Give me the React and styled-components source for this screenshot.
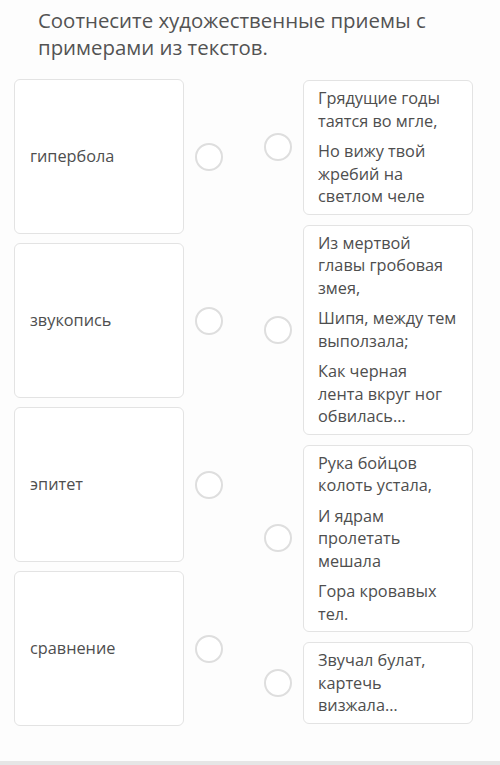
import React from "react";
import styled, { createGlobalStyle } from "styled-components";

const Global = createGlobalStyle`
  html, body { margin: 0; padding: 0; background: #fdfdfd; }
  body { font-family: "Open Sans", "Noto Sans", sans-serif; color: #4e4e4e; }
`;

const Page = styled.div`
  width: 500px;
  height: 765px;
  display: flex;
  flex-direction: column;
  background: #fdfdfd;
  overflow: hidden;
`;

const Title = styled.h1`
  margin: 0;
  padding: 7px 30px 0 38px;
  font-size: 20.4px;
  line-height: 27px;
  font-weight: 400;
  color: #535353;
`;

const Board = styled.div`
  display: grid;
  grid-template-columns: 223px 223px;
  justify-content: space-between;
  padding: 0 27px 0 14px;
  margin-top: 18px;
  flex: 1;
`;

const Column = styled.div`
  display: flex;
  flex-direction: column;
  gap: ${(p) => p.$gap}px;
  padding-top: ${(p) => p.$top}px;
`;

const Row = styled.div`
  display: flex;
  align-items: center;
  gap: 11px;
  justify-content: ${(p) => (p.$end ? "flex-end" : "flex-start")};
`;

const Card = styled.div`
  box-sizing: border-box;
  width: 170px;
  flex: none;
  background: #fff;
  border: 1.5px solid #e3e3e3;
  border-radius: 6px;
  font-size: 16.3px;
  line-height: 22.5px;
  color: #4e4e4e;
`;

const TermCard = styled(Card)`
  height: 155px;
  display: flex;
  align-items: center;
  padding: 0 15px;
`;

const QuoteCard = styled(Card)`
  padding: 6px 8px 6px 14px;
  display: flex;
  flex-direction: column;
  gap: 8px;
`;

const Line = styled.p`
  margin: 0;
  white-space: nowrap;
`;

const Dot = styled.span`
  box-sizing: border-box;
  width: 28px;
  height: 28px;
  flex: none;
  border-radius: 50%;
  border: 2px solid #dedede;
  background: #fff;
`;

const Footer = styled.div`
  height: 4px;
  background: #e6e6e6;
`;

const terms = ["гипербола", "звукопись", "эпитет", "сравнение"];

const quotes = [
  [["Грядущие годы", "таятся во мгле,"], ["Но вижу твой", "жребий на", "светлом челе"]],
  [
    ["Из мертвой", "главы гробовая", "змея,"],
    ["Шипя, между тем", "выползала;"],
    ["Как черная", "лента вкруг ног", "обвилась…"],
  ],
  [["Рука бойцов", "колоть устала,"], ["И ядрам", "пролетать", "мешала"], ["Гора кровавых", "тел."]],
  [["Звучал булат,", "картечь", "визжала…"]],
];

export default function App() {
  return (
    <Page>
      <Global />
      <Title>Соотнесите художественные приемы с примерами из текстов.</Title>
      <Board>
        <Column $gap={9} $top={0}>
          {terms.map((t) => (
            <Row key={t}>
              <TermCard>{t}</TermCard>
              <Dot />
            </Row>
          ))}
        </Column>
        <Column $gap={10} $top={1}>
          {quotes.map((q, i) => (
            <Row key={i} $end>
              <Dot />
              <QuoteCard>
                {q.map((para, j) => (
                  <Line key={j}>
                    {para.map((l, k) => (
                      <React.Fragment key={k}>
                        {k > 0 && <br />}
                        {l}
                      </React.Fragment>
                    ))}
                  </Line>
                ))}
              </QuoteCard>
            </Row>
          ))}
        </Column>
      </Board>
      <Footer />
    </Page>
  );
}
